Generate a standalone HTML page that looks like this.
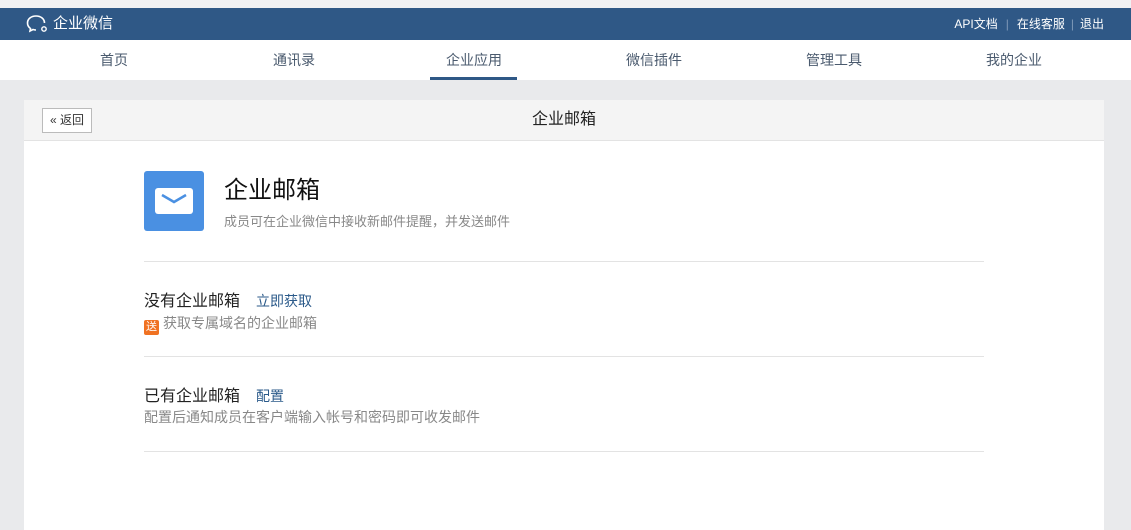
<!DOCTYPE html>
<html><head><meta charset="utf-8"><style>
*{margin:0;padding:0;box-sizing:border-box}
body{width:1131px;height:516px;overflow:hidden;background:#e9eaec;font-family:"Liberation Sans","Noto Sans CJK SC",sans-serif;position:relative}
.top{position:absolute;left:0;top:0;width:1131px;height:8px;background:#f1f1f3}
.hd{position:absolute;left:0;top:8px;width:1131px;height:32px;background:#2f5886;color:#fff}
.logo{position:absolute;left:26px;top:6px;font-size:15px;line-height:20px;display:flex;align-items:center}
.links{position:absolute;right:27px;top:8px;font-size:12px;line-height:16px}
.links span.s{color:#7f98b8;margin:0 8px}
.nav{position:absolute;left:0;top:40px;width:1131px;height:40px;background:#fff}
.nav a{position:absolute;top:0;width:180px;text-align:center;font-size:14px;line-height:40px;color:#4a5a6e;text-decoration:none}
.ul{position:absolute;left:430px;top:77px;width:87px;height:3px;background:#2f5886}
.card{position:absolute;left:24px;top:100px;width:1080px;height:430px;background:#fff}
.ch{height:41px;background:#f4f4f4;border-bottom:1px solid #e3e3e3;text-align:center;font-size:16px;line-height:40px;color:#222;position:relative}
.back{position:absolute;left:18px;top:8px;width:50px;height:25px;border:1px solid #bbb;background:#fff;font-size:12px;line-height:23px;color:#333;text-align:center}
.ic{position:absolute;left:120px;top:71px;width:60px;height:60px;background:#4a90e2;border-radius:3px}
.t1{position:absolute;left:200px;top:75px;font-size:24px;line-height:32px;color:#111}
.t2{position:absolute;left:200px;top:111px;font-size:13px;color:#888}
.hr{position:absolute;left:120px;width:840px;height:1px;background:#e3e3e3}
.st{position:absolute;left:120px;font-size:16px;color:#222}
.st a{color:#2b5a8a;font-size:14px;margin-left:16px;text-decoration:none}
.sd{position:absolute;left:120px;font-size:14px;color:#888}
.tag{display:inline-block;width:15px;height:15px;background:#f07222;color:#fff;font-size:11px;line-height:15px;text-align:center;border-radius:2px;margin-right:4px;vertical-align:-2px}
</style></head><body>
<div class="top"></div>
<div class="hd">
<div class="logo"><svg width="24" height="20" viewBox="0 0 24 20"><path d="M10 2C5 2 1.5 5 1.5 9c0 2.3 1.2 4.2 3 5.5L4 17l3-1.5c1 .3 2 .5 3 .5" fill="none" stroke="#fff" stroke-width="1.6"/><path d="M10 2c5 0 8.5 3 8.5 7" fill="none" stroke="#fff" stroke-width="1.6"/><circle cx="18" cy="15" r="2.2" fill="none" stroke="#fff" stroke-width="1.4"/></svg><span style="margin-left:3px">企业微信</span></div>
<div class="links">API文档<span class="s">|</span>在线客服<span class="s" style="margin:0 6px">|</span>退出</div>
</div>
<div class="nav">
<a style="left:24px">首页</a><a style="left:204px">通讯录</a><a style="left:384px">企业应用</a><a style="left:564px">微信插件</a><a style="left:744px">管理工具</a><a style="left:924px">我的企业</a>
</div>
<div class="ul"></div>
<div class="card">
<div class="ch">企业邮箱<div class="back">« 返回</div></div>
<div class="ic"><svg width="60" height="60" viewBox="0 0 60 60"><rect x="11" y="17" width="38" height="26" rx="3" fill="#fff"/><path d="M18 24l12 7 12-7" fill="none" stroke="#4a90e2" stroke-width="2.5"/></svg></div>
<div class="t1">企业邮箱</div>
<div class="t2">成员可在企业微信中接收新邮件提醒，并发送邮件</div>
<div class="hr" style="top:161px"></div>
<div class="st" style="top:187px">没有企业邮箱<a>立即获取</a></div>
<div class="sd" style="top:213px"><span class="tag">送</span>获取专属域名的企业邮箱</div>
<div class="hr" style="top:256px"></div>
<div class="st" style="top:282px">已有企业邮箱<a>配置</a></div>
<div class="sd" style="top:307px">配置后通知成员在客户端输入帐号和密码即可收发邮件</div>
<div class="hr" style="top:351px"></div>
</div>
</body></html>
